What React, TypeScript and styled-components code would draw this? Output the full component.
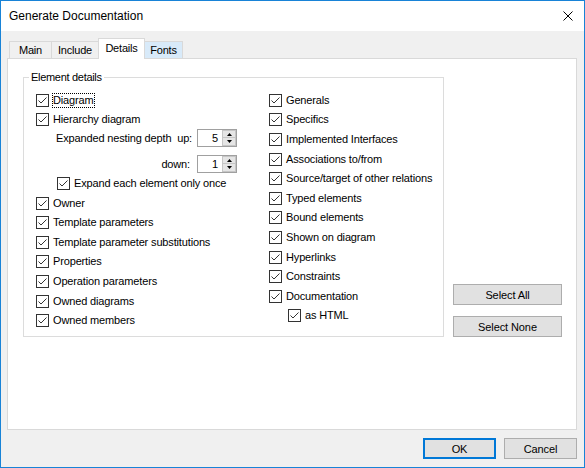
import styled, { createGlobalStyle } from 'styled-components';

const GlobalStyle = createGlobalStyle`
  html, body {
    margin: 0;
    padding: 0;
    background: #ffffff;
  }
  * {
    box-sizing: border-box;
  }
`;

const Window = styled.div`
  width: 585px;
  height: 468px;
  border: 1px solid #1883d7;
  background: #f0f0f0;
  display: flex;
  flex-direction: column;
  font-family: 'Liberation Sans', Arial, sans-serif;
  font-size: 11px;
  color: #000;
`;

const TitleBar = styled.div`
  height: 30px;
  flex: none;
  background: #fff;
  display: flex;
  align-items: center;
  justify-content: space-between;
  padding-left: 8px;
  font-size: 12px;
`;

const Close = styled.svg`
  width: 10px;
  height: 10px;
  margin-right: 11px;
`;

const Body = styled.div`
  flex: 1;
  display: flex;
  flex-direction: column;
  padding: 7px 7px 0 6px;
`;

const TabRow = styled.div`
  height: 20px;
  flex: none;
  display: flex;
  align-items: flex-end;
  padding-left: 2px;
`;

const Tab = styled.div<{ $w: number; $active?: boolean; $hover?: boolean }>`
  width: ${(p) => p.$w}px;
  height: ${(p) => (p.$active ? 21 : 17)}px;
  margin-left: -1px;
  margin-bottom: ${(p) => (p.$active ? -1 : 0)}px;
  position: relative;
  z-index: ${(p) => (p.$active ? 1 : 0)};
  border: 1px solid #d9d9d9;
  border-bottom: none;
  background: ${(p) => (p.$active ? '#fff' : p.$hover ? '#d8eaf9' : '#f0f0f0')};
  display: flex;
  align-items: center;
  justify-content: center;
  padding-bottom: ${(p) => (p.$active ? 2 : 0)}px;
  letter-spacing: -0.2px;
  &:first-child {
    margin-left: 0;
  }
`;

const Panel = styled.div`
  height: 372px;
  flex: none;
  background: #fff;
  border: 1px solid #d9d9d9;
  padding: 18px 0 0 15px;
`;

const PanelRow = styled.div`
  display: flex;
  align-items: flex-end;
  gap: 9px;
`;

const GroupBox = styled.div`
  position: relative;
  width: 421px;
  height: 260px;
  border: 1px solid #dcdcdc;
  padding: 12.6px 0 0 12px;
  display: grid;
  grid-template-columns: 233px 1fr;
  align-items: start;
`;

const Legend = styled.span`
  position: absolute;
  top: -8px;
  left: 5px;
  padding: 0 2px;
  line-height: 14px;
  background: #fff;
  letter-spacing: -0.3px;
`;

const Column = styled.div`
  display: flex;
  flex-direction: column;
`;

const Row = styled.label<{ $indent?: number }>`
  display: flex;
  align-items: center;
  height: 19.6px;
  padding-left: ${(p) => p.$indent ?? 0}px;
  white-space: nowrap;
  margin-top: ${(p) => (p.$indent === 21 ? 1 : 0)}px;
`;

const Box = styled.span`
  width: 13px;
  height: 13px;
  flex: none;
  border: 1px solid #333;
  background: #fff;
  display: flex;
`;

const Text = styled.span<{ $focused?: boolean }>`
  margin-left: 4px;
  line-height: 13px;
  letter-spacing: -0.15px;
  outline: ${(p) => (p.$focused ? '1px dotted #000' : 'none')};
`;

const SpinRow = styled.div<{ $gap: number }>`
  display: flex;
  align-items: center;
  height: 18px;
  margin-top: ${(p) => p.$gap}px;
  padding-left: 20px;
`;

const SpinLabel = styled.span`
  width: 136px;
  padding-right: 2px;
  text-align: right;
  white-space: pre;
  letter-spacing: -0.15px;
`;

const Spinner = styled.div`
  margin-left: 5px;
  width: 40px;
  height: 18px;
  border: 1px solid #a0a0a0;
  background: #fff;
  display: flex;
`;

const SpinValue = styled.span`
  flex: 1;
  text-align: right;
  padding-right: 3px;
  line-height: 16px;
`;

const SpinButtons = styled.div`
  width: 15px;
  display: flex;
  flex-direction: column;
  border-left: 1px solid #fff;
`;

const SpinButton = styled.div`
  flex: 1;
  background: #e5e5e5;
  border: 1px solid #c6c6c6;
  display: flex;
  align-items: center;
  justify-content: center;
  & + & {
    border-top: none;
  }
`;

const ButtonColumn = styled.div`
  width: 109px;
  display: flex;
  flex-direction: column;
  gap: 11px;
`;

const Button = styled.button<{ $primary?: boolean; $w?: number }>`
  width: ${(p) => (p.$w ? `${p.$w}px` : '100%')};
  height: 21px;
  padding: 0;
  background: #e1e1e1;
  border: ${(p) => (p.$primary ? '2px solid #0078d7' : '1px solid #adadad')};
  font-family: 'Liberation Sans', Arial, sans-serif;
  font-size: 11px;
  color: #000;
  letter-spacing: -0.1px;
`;

const Footer = styled.div`
  flex: none;
  display: flex;
  justify-content: flex-end;
  gap: 8px;
  padding: 8px 0 8px 0;
`;

function Check({
  label,
  indent,
  focused,
}: {
  label: string;
  indent?: number;
  focused?: boolean;
}) {
  return (
    <Row $indent={indent}>
      <Box>
        <svg width="11" height="11" viewBox="0 0 11 11">
          <path d="M1.5 5.5 L4 8 L9.5 2.5" fill="none" stroke="#333" strokeWidth="1" />
        </svg>
      </Box>
      <Text $focused={focused}>{label}</Text>
    </Row>
  );
}

function Spin({ label, value, gap }: { label: string; value: number; gap: number }) {
  return (
    <SpinRow $gap={gap}>
      <SpinLabel>{label}</SpinLabel>
      <Spinner>
        <SpinValue>{value}</SpinValue>
        <SpinButtons>
          <SpinButton>
            <svg width="5" height="3" viewBox="0 0 5 3">
              <path d="M2.5 0 L5 3 L0 3 Z" fill="#000" />
            </svg>
          </SpinButton>
          <SpinButton>
            <svg width="5" height="3" viewBox="0 0 5 3">
              <path d="M0 0 L5 0 L2.5 3 Z" fill="#000" />
            </svg>
          </SpinButton>
        </SpinButtons>
      </Spinner>
    </SpinRow>
  );
}

const leftRest = [
  'Owner',
  'Template parameters',
  'Template parameter substitutions',
  'Properties',
  'Operation parameters',
  'Owned diagrams',
  'Owned members',
];

const rightItems = [
  'Generals',
  'Specifics',
  'Implemented Interfaces',
  'Associations to/from',
  'Source/target of other relations',
  'Typed elements',
  'Bound elements',
  'Shown on diagram',
  'Hyperlinks',
  'Constraints',
  'Documentation',
];

export default function App() {
  return (
    <>
      <GlobalStyle />
      <Window>
        <TitleBar>
          <span>Generate Documentation</span>
          <Close viewBox="0 0 10 10">
            <path d="M0.5 0.5 L9.5 9.5 M9.5 0.5 L0.5 9.5" stroke="#000" strokeWidth="1" />
          </Close>
        </TitleBar>
        <Body>
          <TabRow>
            <Tab $w={43}>Main</Tab>
            <Tab $w={48}>Include</Tab>
            <Tab $w={47} $active>
              Details
            </Tab>
            <Tab $w={39} $hover>
              Fonts
            </Tab>
          </TabRow>
          <Panel>
            <PanelRow>
              <GroupBox>
                <Legend>Element details</Legend>
                <Column>
                  <Check label="Diagram" focused />
                  <Check label="Hierarchy diagram" />
                  <Spin label={'Expanded nesting depth  up:'} value={5} gap={-1} />
                  <Spin label="down:" value={1} gap={8} />
                  <Check label="Expand each element only once" indent={21} />
                  {leftRest.map((l) => (
                    <Check key={l} label={l} />
                  ))}
                </Column>
                <Column>
                  {rightItems.map((l) => (
                    <Check key={l} label={l} />
                  ))}
                  <Check label="as HTML" indent={19} />
                </Column>
              </GroupBox>
              <ButtonColumn>
                <Button>Select All</Button>
                <Button>Select None</Button>
              </ButtonColumn>
            </PanelRow>
          </Panel>
          <Footer>
            <Button $primary $w={73}>
              OK
            </Button>
            <Button $w={73}>Cancel</Button>
          </Footer>
        </Body>
      </Window>
    </>
  );
}
